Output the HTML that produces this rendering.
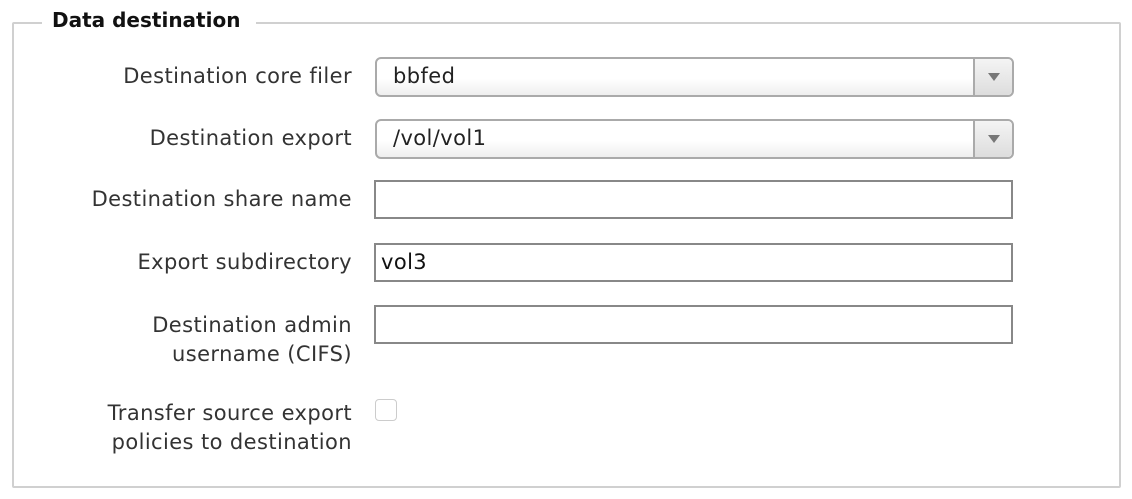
<!DOCTYPE html>
<html><head><style>
body{margin:0;width:1132px;height:499px;background:#fff;font-family:"DejaVu Sans","Liberation Sans",sans-serif;color:#333;position:relative;overflow:hidden}
.fs{position:absolute;left:12px;top:22px;width:1105px;height:462px;border:2px solid #d0d0d0;border-radius:2px}
.lg{position:absolute;left:42px;top:8px;padding:0 16px 0 10px;background:#fff;font-weight:bold;font-size:20px;letter-spacing:0px;color:#111}
.lb{position:absolute;right:780px;text-align:right;font-size:21px;letter-spacing:0.4px;line-height:29px;color:#333}
.sel{position:absolute;left:375px;width:635px;height:36px;border:2px solid #aaa;border-radius:6px;background:linear-gradient(#fff,#fff 55%,#efefef);box-sizing:content-box}
.sel span{position:absolute;left:16px;top:5px;font-size:21px;letter-spacing:0.4px;color:#222}
.sel .ar{position:absolute;right:0;top:0;width:37px;height:36px;border-left:2px solid #aaa;background:linear-gradient(#f4f4f4,#ddd);border-radius:0 5px 5px 0}
.sel .ar:after{content:"";position:absolute;left:13px;top:14px;border-left:6px solid transparent;border-right:6px solid transparent;border-top:8px solid #777}
.in{position:absolute;left:374px;width:635px;height:35px;border:2px solid #888;background:#fff}
.in span{position:absolute;left:5px;top:5px;font-size:21px;letter-spacing:0.4px;color:#111}
.cb{position:absolute;left:375px;top:399px;width:20px;height:20px;border:1px solid #ccc;border-radius:4px;background:#fff}
</style></head><body>
<div class="fs"></div>
<div class="lg">Data destination</div>
<div class="lb" style="top:62px">Destination core filer</div>
<div class="sel" style="top:57px"><span>bbfed</span><div class="ar"></div></div>
<div class="lb" style="top:124px">Destination export</div>
<div class="sel" style="top:119px"><span>/vol/vol1</span><div class="ar"></div></div>
<div class="lb" style="top:185px">Destination share name</div>
<div class="in" style="top:180px"></div>
<div class="lb" style="top:248px">Export subdirectory</div>
<div class="in" style="top:243px"><span>vol3</span></div>
<div class="lb" style="top:311px">Destination admin<br>username (CIFS)</div>
<div class="in" style="top:305px"></div>
<div class="lb" style="top:399px">Transfer source export<br>policies to destination</div>
<div class="cb"></div>
</body></html>
